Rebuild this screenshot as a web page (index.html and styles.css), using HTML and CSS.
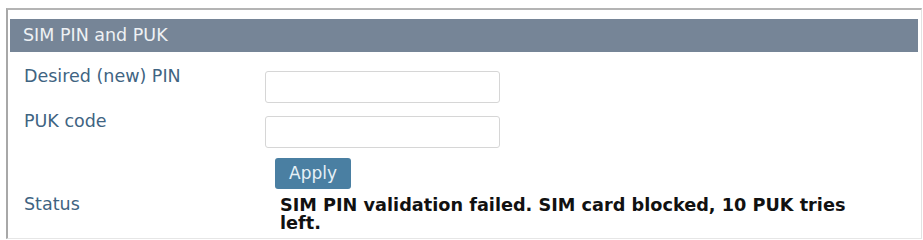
FILE: index.html
```html
<!DOCTYPE html>
<html>
<head>
<meta charset="utf-8">
<link rel="stylesheet" href="styles.css">
</head>
<body>
<div class="panel">
  <div class="panel-header">SIM PIN and PUK</div>
  <div class="form">
    <div class="row">
      <label class="label">Desired (new) PIN</label>
      <div class="field"><input class="input" type="text"></div>
    </div>
    <div class="row">
      <label class="label">PUK code</label>
      <div class="field"><input class="input" type="text"></div>
    </div>
    <div class="row row-action">
      <div class="label"></div>
      <div class="field"><button class="btn">Apply</button></div>
    </div>
    <div class="row row-status">
      <div class="label">Status</div>
      <div class="field status-value">SIM PIN validation failed. SIM card blocked, 10 PUK tries left.</div>
    </div>
  </div>
</div>
</body>
</html>
```

FILE: styles.css
```css
html, body {
  margin: 0;
  padding: 0;
  background: #ffffff;
}

body {
  font-family: "DejaVu Sans", Verdana, sans-serif;
  font-size: 17.5px;
  overflow: hidden;
  height: 240px;
}

.panel {
  margin: 8px 1px 0 6px;
  border-left: 2px solid #a8a8a8;
  border-top: 2px solid #b4b4b4;
  border-right: 1px solid #e2e2e2;
  border-bottom: 1px solid #e6e6e6;
  padding: 9px 3px 0 2px;
  height: 231px;
  box-sizing: border-box;
  overflow: hidden;
}

.panel-header {
  background: #768597;
  color: #eef1f4;
  height: 33px;
  line-height: 33px;
  padding-left: 13px;
}

.form {
  padding: 14px 0 0 14px;
}

.row {
  display: flex;
  align-items: flex-start;
  margin-bottom: 8px;
}

.label {
  width: 241px;
  flex: none;
  line-height: 20px;
  color: #3f6482;
}

.field {
  flex: none;
}

.input {
  display: block;
  margin: 5px 0 0 0;
  width: 235px;
  height: 32px;
  box-sizing: border-box;
  border: 1px solid #d6d6d6;
  border-radius: 3px;
  background: #fff;
  padding: 0 6px;
  font: inherit;
}

.row-action {
  margin-bottom: 0;
}

.btn {
  display: block;
  margin: 2px 0 0 10px;
  width: 76px;
  height: 31px;
  border: none;
  border-radius: 3px;
  background: #4a7fa2;
  color: #e6f0f6;
  font: inherit;
  font-size: 17px;
  padding: 0;
  line-height: 31px;
}

.row-status {
  margin-top: 5px;
}

.status-value {
  width: 585px;
  padding: 3px 0 0 15px;
  font-weight: bold;
  font-size: 17.7px;
  line-height: 17.6px;
  color: #111;
}
```
